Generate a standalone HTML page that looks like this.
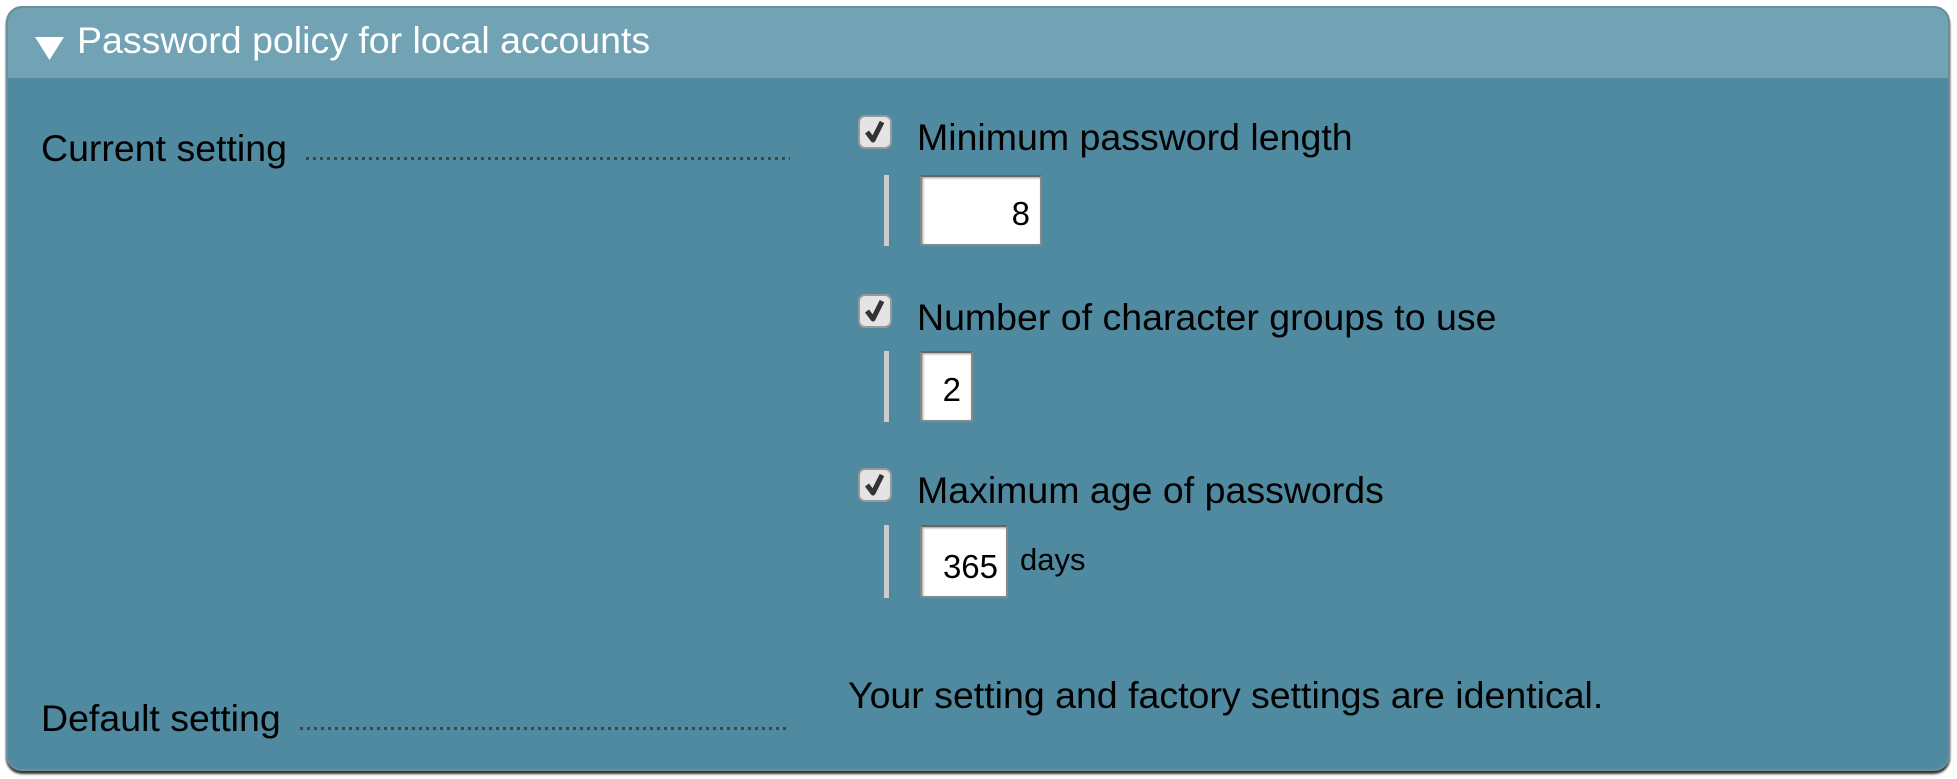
<!DOCTYPE html>
<html><head><style>
*{margin:0;padding:0;box-sizing:border-box}
body{width:1957px;height:779px;background:#fff;position:relative;overflow:hidden;font-family:"Liberation Sans",Arial,sans-serif}
.panel{position:absolute;left:6px;top:6px;width:1944px;height:765px;background:#4f8aa0;border:2px solid #6d8e99;border-radius:16px;box-shadow:0 3px 2px #333;overflow:hidden}
.hdr{position:absolute;left:0;top:0;right:0;height:70px;background:#72a3b5}
.t{position:absolute;line-height:1;white-space:nowrap;color:#000;font-size:37.5px}
.dots{position:absolute;height:3px;background:repeating-linear-gradient(90deg,#444 0 3px,transparent 3px 7px)}
.bar{position:absolute;left:884px;width:5px;background:#ccc}
.inp{position:absolute;left:920px;background:#fff;border:2px solid #888;border-top-color:#666;box-shadow:inset 1px 1px 2px #999;font-size:33px;line-height:1;text-align:right;padding-right:10px}
</style></head><body>
<div class="panel"><div class="hdr"></div></div>
<svg style="position:absolute;left:35px;top:37px" width="29" height="23"><polygon points="0,0 29,0 14.5,23" fill="#fff"/></svg>
<div class="t" style="left:77px;top:22px;color:#fff">Password policy for local accounts</div>

<div class="t" style="left:41px;top:130px">Current setting</div>
<div class="dots" style="left:306px;width:484px;top:157px"></div>
<div class="t" style="left:41px;top:700px">Default setting</div>
<div class="dots" style="left:300px;width:490px;top:727px"></div>

<svg style="position:absolute;left:858px;top:115px" width="34" height="34"><rect x="1" y="1" width="32" height="32" rx="6" fill="#e4e4e4" stroke="#999" stroke-width="2"/><path d="M9 17 L15 25 L24 7" fill="none" stroke="#333" stroke-width="5" stroke-linejoin="round"/></svg>
<div class="t" style="left:917px;top:119px">Minimum password length</div>
<div class="bar" style="top:175px;height:71px"></div>
<div class="inp" style="top:175px;width:122px;height:71px;padding-top:20px">8</div>

<svg style="position:absolute;left:858px;top:294px" width="34" height="34"><rect x="1" y="1" width="32" height="32" rx="6" fill="#e4e4e4" stroke="#999" stroke-width="2"/><path d="M9 17 L15 25 L24 7" fill="none" stroke="#333" stroke-width="5" stroke-linejoin="round"/></svg>
<div class="t" style="left:917px;top:299px">Number of character groups to use</div>
<div class="bar" style="top:351px;height:71px"></div>
<div class="inp" style="top:351px;width:53px;height:71px;padding-top:20px">2</div>

<svg style="position:absolute;left:858px;top:468px" width="34" height="34"><rect x="1" y="1" width="32" height="32" rx="6" fill="#e4e4e4" stroke="#999" stroke-width="2"/><path d="M9 17 L15 25 L24 7" fill="none" stroke="#333" stroke-width="5" stroke-linejoin="round"/></svg>
<div class="t" style="left:917px;top:472px">Maximum age of passwords</div>
<div class="bar" style="top:525px;height:73px"></div>
<div class="inp" style="top:525px;width:88px;height:73px;padding-top:23px;padding-right:8px">365</div>
<div class="t" style="left:1020px;top:544px;font-size:31px">days</div>

<div class="t" style="left:848px;top:677px">Your setting and factory settings are identical.</div>
</body></html>
